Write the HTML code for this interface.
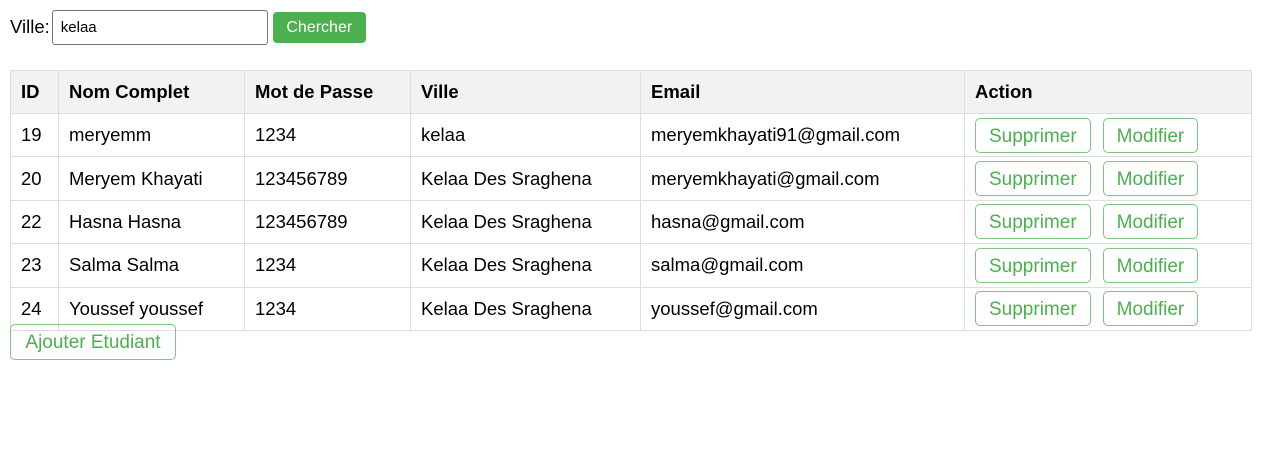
<!DOCTYPE html>
<html><head><style>
body{margin:0;font-family:"Liberation Sans",Arial,sans-serif;font-size:18px;color:#000;background:#fff}
.top{position:absolute;left:10px;top:9px;height:36px;display:flex;align-items:center;font-size:18.5px}
.top input{width:216px;height:35px;box-sizing:border-box;border:1px solid #767676;border-radius:3px;font:15px "Liberation Sans",Arial,sans-serif;padding:0 8px;margin-left:2px}
.top .s{margin-left:5px;height:31px;width:93px;background:#4caf50;color:#fff;border:none;border-radius:4px;font:16px/31px "Liberation Sans",Arial,sans-serif;padding:0;margin-top:1px}
table{position:absolute;left:10px;top:70px;border-collapse:collapse;width:1242px;font-size:18.5px}
th,td{border:1px solid #ddd;text-align:left;padding:0 10px;box-sizing:border-box}
th{background:#f2f2f2;font-weight:bold;height:43px}
td{height:43.4px}
.b{display:inline-block;border:1px solid #7fc582;color:#4caf50;border-radius:5px;height:35px;line-height:35px;box-sizing:border-box;padding:0 13px;font-size:19px;margin-right:8px;vertical-align:middle}
.b.m{margin-left:4px}
.add{position:absolute;left:10px;top:324px;height:36px;line-height:36px;width:166px;text-align:center;padding:0}
</style></head><body>
<div class="top">Ville:<input value="kelaa"><button class="s">Chercher</button></div>
<table>
<tr><th style="width:48px">ID</th><th style="width:186px">Nom Complet</th><th style="width:166px">Mot de Passe</th><th style="width:230px">Ville</th><th style="width:324px">Email</th><th>Action</th></tr>
<tr><td>19</td><td>meryemm</td><td>1234</td><td>kelaa</td><td>meryemkhayati91@gmail.com</td><td><span class="b">Supprimer</span><span class="b m">Modifier</span></td></tr>
<tr><td>20</td><td>Meryem Khayati</td><td>123456789</td><td>Kelaa Des Sraghena</td><td>meryemkhayati@gmail.com</td><td><span class="b">Supprimer</span><span class="b m">Modifier</span></td></tr>
<tr><td>22</td><td>Hasna Hasna</td><td>123456789</td><td>Kelaa Des Sraghena</td><td>hasna@gmail.com</td><td><span class="b">Supprimer</span><span class="b m">Modifier</span></td></tr>
<tr><td>23</td><td>Salma Salma</td><td>1234</td><td>Kelaa Des Sraghena</td><td>salma@gmail.com</td><td><span class="b">Supprimer</span><span class="b m">Modifier</span></td></tr>
<tr><td>24</td><td>Youssef youssef</td><td>1234</td><td>Kelaa Des Sraghena</td><td>youssef@gmail.com</td><td><span class="b">Supprimer</span><span class="b m">Modifier</span></td></tr>
</table>
<span class="b add">Ajouter Etudiant</span>
</body></html>
